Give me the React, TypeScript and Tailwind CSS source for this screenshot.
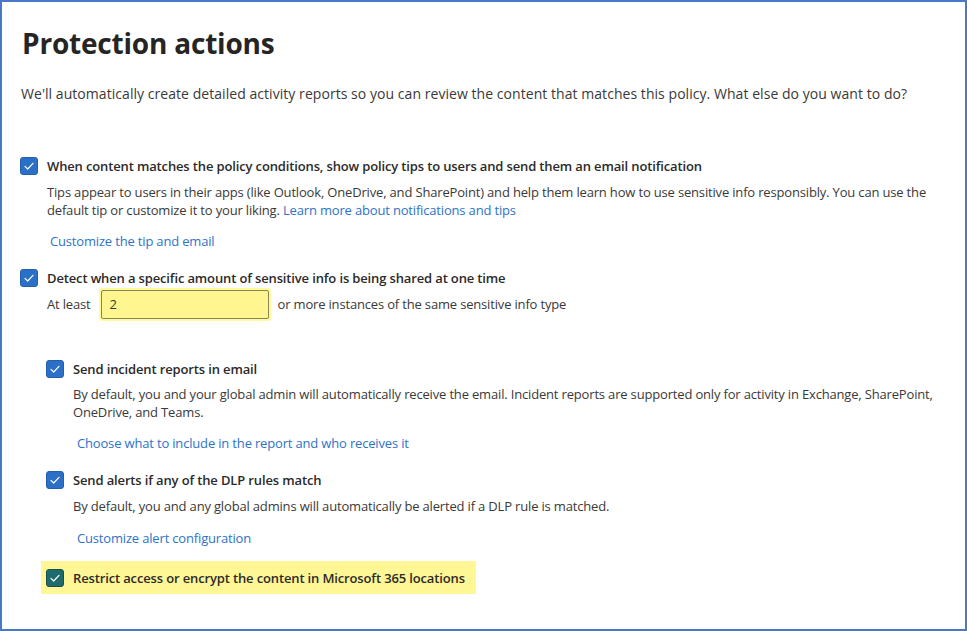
import { ReactNode } from 'react'

const font = { fontFamily: '"Open Sans", "Noto Sans", sans-serif' }

function Check({ teal = false }: { teal?: boolean }) {
  return (
    <span
      className={`flex h-[18px] w-[18px] shrink-0 items-center justify-center rounded-[3px] ${
        teal ? 'bg-[#1e6a6c] border border-[#154f52]' : 'bg-[#2b6fc7] border border-[#235fae]'
      }`}
    >
      <svg width="12" height="12" viewBox="0 0 12 12" fill="none">
        <path d="M2 6.3 L4.7 9 L10 3.3" stroke="#ffffff" strokeWidth="1.2" strokeLinecap="round" strokeLinejoin="round" />
      </svg>
    </span>
  )
}

function Row({ label, teal }: { label: string; teal?: boolean }) {
  return (
    <div className="flex h-[20px] items-center gap-[9px]">
      <Check teal={teal} />
      <span className="whitespace-nowrap text-[13px] font-semibold leading-[20px] tracking-[-0.14px] text-[#2b2a29]">
        {label}
      </span>
    </div>
  )
}

function Desc({ children, className = '' }: { children: ReactNode; className?: string }) {
  return <p className={`text-[13px] leading-[18px] tracking-[-0.17px] text-[#3a3938] ${className}`}>{children}</p>
}

function Link({ children, className = '' }: { children: ReactNode; className?: string }) {
  return <div className={`text-[13px] leading-[20px] tracking-[-0.17px] text-[#2e73c8] ${className}`}>{children}</div>
}

export default function App() {
  return (
    <div style={font} className="h-[631px] w-[967px] overflow-hidden border-2 border-[#4a78c8] bg-white pl-[18px]">
      <h1 className="mt-[21px] pl-[2px] text-[28px] font-bold leading-[40px] tracking-[-0.2px] text-[#262524]">
        Protection actions
      </h1>
      <p className="mt-[21px] pl-[1px] text-[14px] leading-[20px] tracking-[0.05px] text-[#3a3938]">
        We'll automatically create detailed activity reports so you can review the content that matches this policy. What else do you want to do?
      </p>

      <div className="mt-[52px]">
        <Row label="When content matches the policy conditions, show policy tips to users and send them an email notification" />
        <div className="pl-[27px] pr-[20px]">
          <Desc className="mt-[7px]">
            Tips appear to users in their apps (like Outlook, OneDrive, and SharePoint) and help them learn how to use sensitive info responsibly. You can use the default tip or customize it to your liking.{' '}
            <span className="text-[#2e73c8]">Learn more about notifications and tips</span>
          </Desc>
          <Link className="mt-[12px] pl-[3px]">Customize the tip and email</Link>
        </div>

        <div className="mt-[17px]">
          <Row label="Detect when a specific amount of sensitive info is being shared at one time" />
        </div>
        <div className="flex items-center pl-[27px]">
          <span className="text-[13px] tracking-[-0.17px] text-[#3a3938]">At least</span>
          <div className="ml-[8px] rounded-[3px] bg-[#fffb9c] p-[2px]">
            <div className="flex h-[29px] w-[168px] items-center rounded-[2px] border border-[#85845e] bg-[#fff68f] pl-[8px] text-[13px] text-[#3a3938]">
              2
            </div>
          </div>
          <span className="ml-[7px] text-[13px] tracking-[-0.17px] text-[#3a3938]">
            or more instances of the same sensitive info type
          </span>
        </div>

        <div className="pl-[26px]">
          <div className="mt-[38px]">
            <Row label="Send incident reports in email" />
          </div>
          <div className="pl-[27px] pr-[6px]">
            <Desc className="mt-[6px]">
              By default, you and your global admin will automatically receive the email. Incident reports are supported only for activity in Exchange, SharePoint, OneDrive, and Teams.
            </Desc>
            <Link className="mt-[12px] pl-[4px]">Choose what to include in the report and who receives it</Link>
          </div>

          <div className="mt-[17px]">
            <Row label="Send alerts if any of the DLP rules match" />
          </div>
          <div className="pl-[27px]">
            <Desc className="mt-[7px]">
              By default, you and any global admins will automatically be alerted if a DLP rule is matched.
            </Desc>
            <Link className="mt-[13px] pl-[4px]">Customize alert configuration</Link>
          </div>

          <div className="mt-[13px] -ml-[5px] flex h-[33px] w-fit items-center bg-[#fff796] pl-[5px] pr-[11px]">
            <Row label="Restrict access or encrypt the content in Microsoft 365 locations" teal />
          </div>
        </div>
      </div>
    </div>
  )
}
